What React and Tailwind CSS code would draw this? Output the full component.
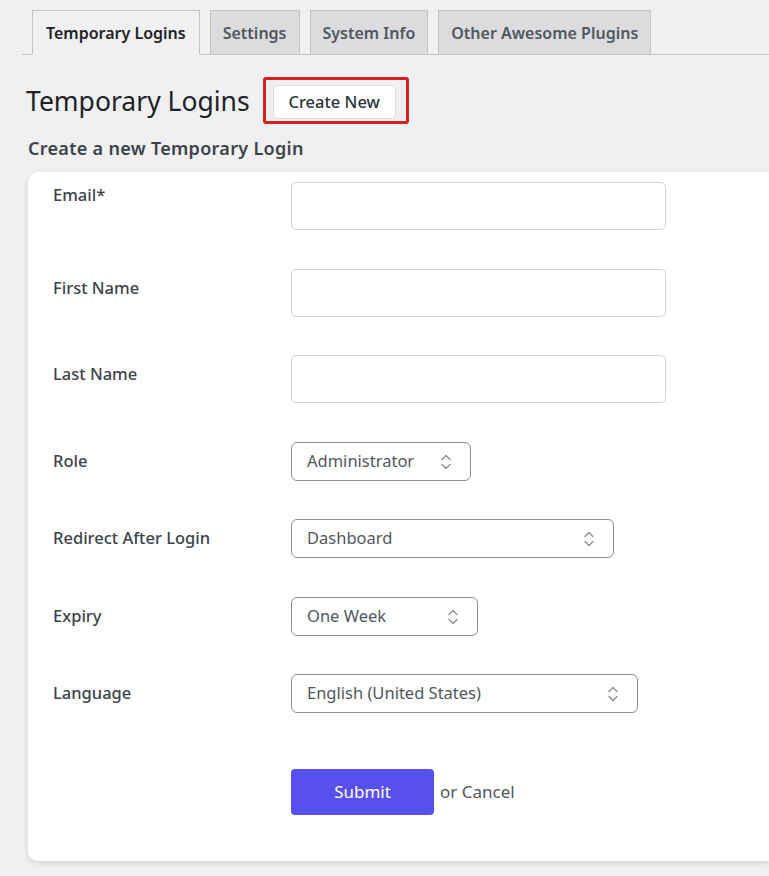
import React from 'react';

const font = { fontFamily: '"Noto Sans", "Open Sans", sans-serif' };

const Chevrons = () => (
  <svg width="12" height="18" viewBox="0 0 12 18" fill="none" stroke="#8c8f94" strokeWidth="1.4" strokeLinecap="round" strokeLinejoin="round">
    <path d="M2 6.5 L6 2.5 L10 6.5" />
    <path d="M2 11.5 L6 15.5 L10 11.5" />
  </svg>
);

const tabs = ['Temporary Logins', 'Settings', 'System Info', 'Other Awesome Plugins'];

const TextRow = ({ label, top, pt }) => (
  <div className={`flex ${top}`}>
    <label className={`w-[238px] shrink-0 ${pt} text-[16.5px] font-medium text-[#3c434a]`}>{label}</label>
    <input type="text" className="h-[48px] w-[375px] rounded-[5px] border border-[#d0d1d4] bg-white px-3 outline-none" />
  </div>
);

const SelectRow = ({ label, value, width, top }) => (
  <div className={`flex items-center ${top}`}>
    <label className="w-[238px] shrink-0 text-[16.5px] font-medium text-[#3c434a]">{label}</label>
    <div className={`flex h-[39px] ${width} items-center justify-between rounded-[6px] border border-[#8c8f94] bg-white pl-[15px] pr-[18px] text-[16.5px] text-[#50575e]`}>
      <span>{value}</span>
      <Chevrons />
    </div>
  </div>
);

export default function App() {
  return (
    <div className="min-h-[876px] bg-[#f0f0f1] pb-4 text-[#3c434a]" style={font}>
      <div className="ml-[22px] flex gap-[10px] border-b border-[#c3c4c7] pl-[10px] pt-[10px]">
        {tabs.map((t, i) => (
          <div
            key={t}
            className={
              i === 0
                ? '-mb-px flex h-[45px] items-center border border-b-[#f0f0f1] border-[#c3c4c7] bg-[#f0f0f1] px-[13px] text-[16px] font-semibold text-[#1d2327]'
                : 'flex h-[44px] items-center border border-b-0 border-[#c3c4c7] bg-[#dcdcde] px-[12px] text-[16px] font-semibold text-[#50575e]'
            }
          >
            {t}
          </div>
        ))}
      </div>

      <div className="mt-[22px] flex items-center pl-[26px]">
        <h1 className="text-[26.5px] font-normal leading-[40px] text-[#1d2327]">Temporary Logins</h1>
        <div className="ml-[13px] rounded-[3px] border-[3px] border-[#d61f1f] pb-[2px] pl-[7px] pr-[10px] pt-[5px]">
          <button className="block h-[34px] w-[123px] rounded-[4px] border border-[#dcdcde] bg-white text-[16.5px] font-medium text-[#2c3338]">
            Create New
          </button>
        </div>
      </div>

      <h2 className="mt-[10px] pl-[28px] text-[18px] font-semibold leading-[28px] tracking-[0.3px] text-[#3c434a]">Create a new Temporary Login</h2>

      <div className="ml-[28px] mt-[10px] h-[689px] rounded-l-[10px] bg-white pl-[25px] pt-[10px] shadow-[0_2px_6px_rgba(0,0,0,0.12)]">
        <TextRow label="Email*" top="" pt="pt-px" />
        <TextRow label="First Name" top="mt-[39px]" pt="pt-[7px]" />
        <TextRow label="Last Name" top="mt-[38px]" pt="pt-[7px]" />
        <SelectRow label="Role" value="Administrator" width="w-[180px]" top="mt-[39px]" />
        <SelectRow label="Redirect After Login" value="Dashboard" width="w-[323px]" top="mt-[38px]" />
        <SelectRow label="Expiry" value="One Week" width="w-[187px]" top="mt-[39px]" />
        <SelectRow label="Language" value="English (United States)" width="w-[347px]" top="mt-[38px]" />
        <div className="ml-[238px] mt-[56px] flex items-center">
          <button className="h-[46px] w-[143px] rounded-[4px] bg-[#5850ec] text-[17px] text-white">Submit</button>
          <span className="ml-[6px] text-[17px] text-[#50575e]">or Cancel</span>
        </div>
      </div>
    </div>
  );
}
